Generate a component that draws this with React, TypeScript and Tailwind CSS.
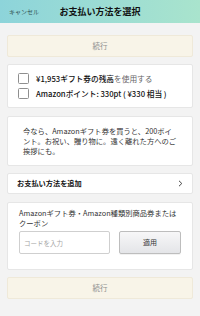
import React from "react";

function ContinueButton() {
  return (
    <button className="flex h-[22px] w-full items-center justify-center rounded-[2px] border border-[#efe9d9] bg-[#f8f4e8] text-[7.5px] text-[#8f8f8f]">
      続行
    </button>
  );
}

function CheckRow({ children }: { children: React.ReactNode }) {
  return (
    <label className="flex h-[11px] items-center gap-[7px]">
      <span className="block h-[11px] w-[11px] shrink-0 rounded-[1.5px] border border-[#8f8f8f] bg-white" />
      <span className="whitespace-nowrap text-[7.7px] font-medium leading-none text-[#111]">{children}</span>
    </label>
  );
}

export default function App() {
  return (
    <div className="h-[316px] w-[200px] overflow-hidden bg-[#f3f3f3] font-['Noto_Sans_CJK_JP','Noto_Sans',sans-serif]">
      <header className="relative flex h-[23px] items-center justify-center bg-gradient-to-r from-[#8dd4da] to-[#a9e4cd]">
        <span className="absolute left-[9px] text-[6px] text-[#2f4f50]">キャンセル</span>
        <h1 className="text-[9px] font-bold text-[#111]">お支払い方法を選択</h1>
      </header>

      <main className="flex flex-col px-[7px] pt-[12px]">
        <ContinueButton />

        <section className="mt-[7px] flex h-[44px] flex-col justify-center gap-[4px] rounded-[2px] border border-[#e6e6e6] bg-white pl-[10px]">
          <CheckRow>
            ¥1,953ギフト券の残高<span className="font-normal text-[#666]">を使用する</span>
          </CheckRow>
          <CheckRow>Amazonポイント: 330pt ( ¥330 相当 )</CheckRow>
        </section>

        <section className="mt-[8px] flex h-[50px] items-center rounded-[2px] border border-[#e6e6e6] bg-white pl-[15px]">
          <p className="whitespace-nowrap text-[7.3px] leading-[10px] text-[#333]">
            今なら、Amazonギフト券を買うと、200ポイ
            <br />
            ント。お祝い、贈り物に。遠く離れた方へのご
            <br />
            挨拶にも。
          </p>
        </section>

        <section className="mt-[7px] flex h-[21px] items-center justify-between rounded-[2px] border border-[#e6e6e6] bg-white pl-[9px] pr-[9px]">
          <span className="text-[7.2px] font-bold text-[#111]">お支払い方法を追加</span>
          <svg width="5" height="7" viewBox="0 0 5 7" fill="none">
            <path d="M1 0.8L3.8 3.5L1 6.2" stroke="#444" strokeWidth="1" />
          </svg>
        </section>

        <section className="mt-[8px] flex h-[68px] flex-col rounded-[2px] border border-[#e6e6e6] bg-white px-[11px] pt-[5px]">
          <p className="text-[7.3px] leading-[10px] text-[#333]">
            Amazonギフト券・Amazon種類別商品券または
            <br />
            クーポン
          </p>
          <div className="mt-[3px] flex items-center gap-[9px]">
            <input
              placeholder="コードを入力"
              className="h-[23px] w-[92px] rounded-[2px] border border-[#cfcfcf] bg-white px-[4px] text-[6.5px] text-[#333] outline-none placeholder:text-[#a5a5a5]"
            />
            <button className="flex h-[23px] w-[63px] items-center justify-center rounded-[2px] border border-[#bdbdbd] bg-gradient-to-b from-[#f7f7f8] to-[#e4e5e8] text-[7px] text-[#333] shadow-[0_1px_0_rgba(0,0,0,0.05)]">
              適用
            </button>
          </div>
        </section>

        <div className="mt-[7px]">
          <ContinueButton />
        </div>
      </main>
    </div>
  );
}
